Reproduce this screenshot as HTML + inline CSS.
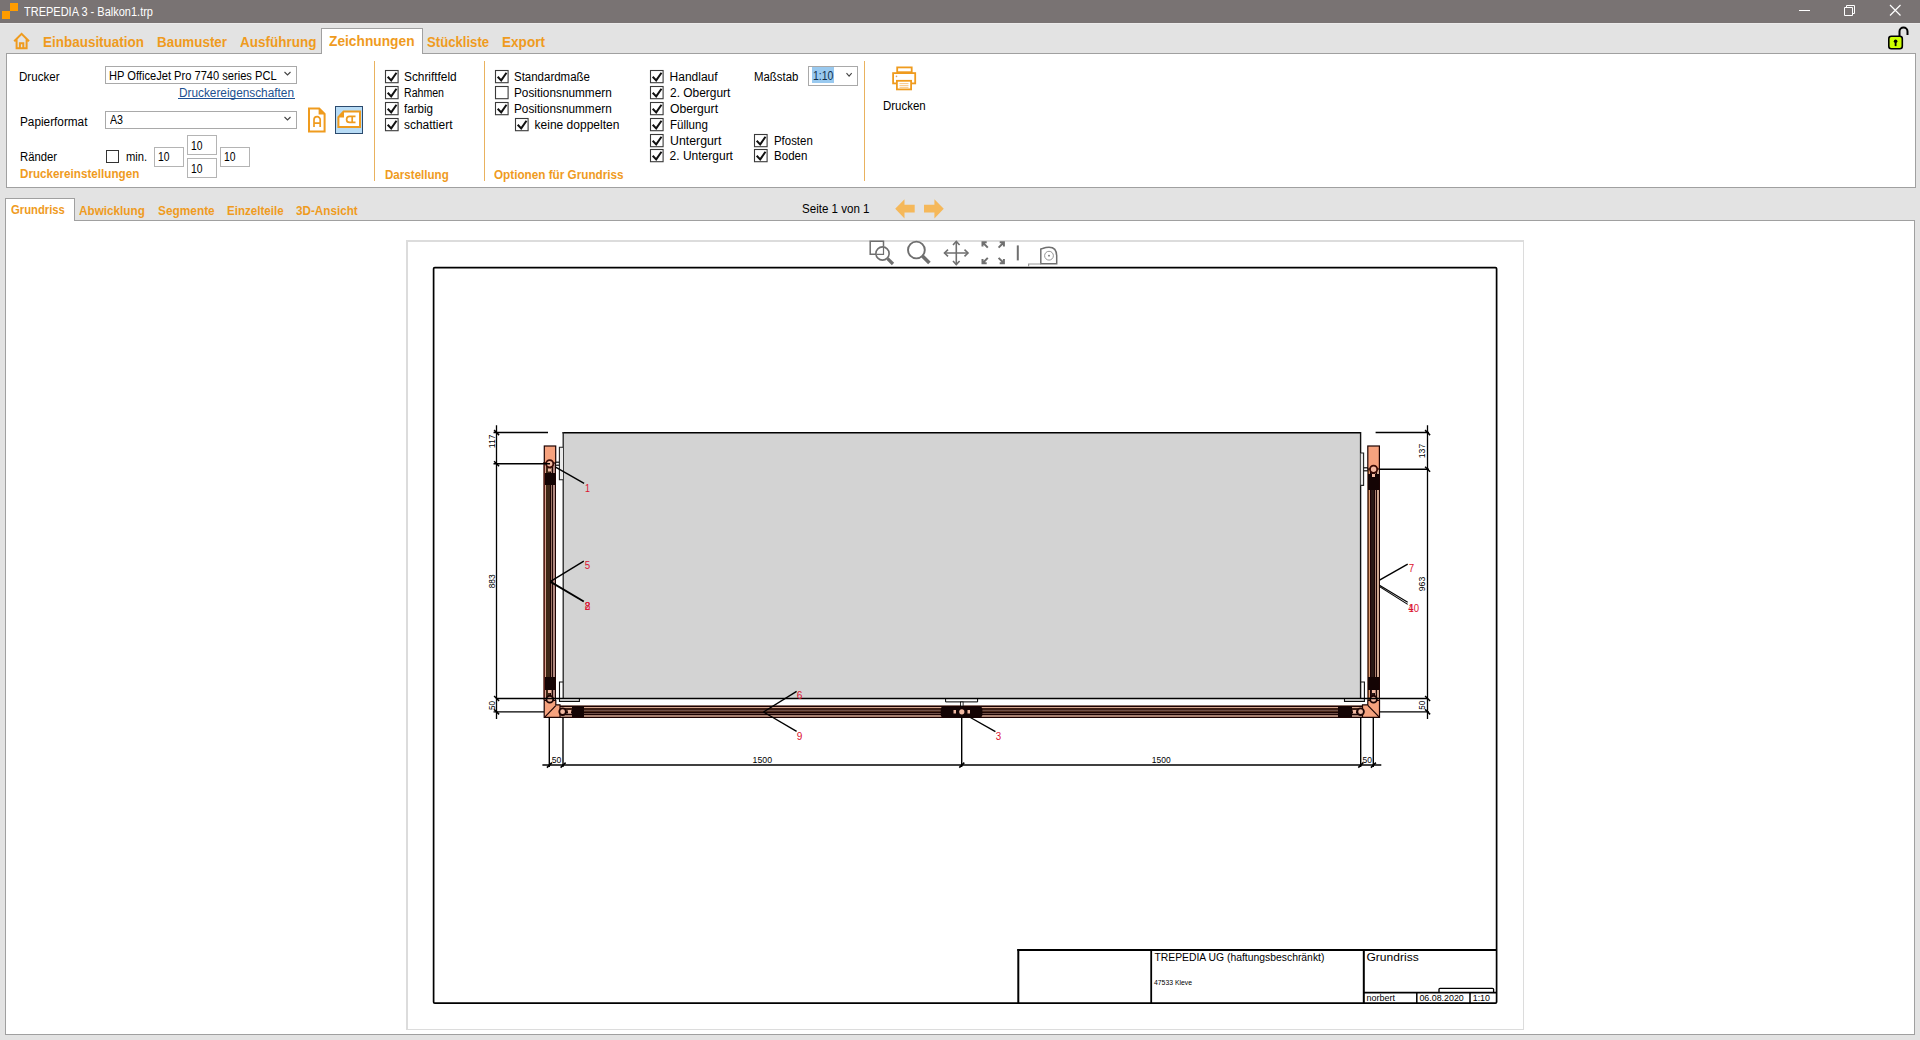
<!DOCTYPE html>
<html><head><meta charset="utf-8">
<style>
*{margin:0;padding:0;box-sizing:border-box}
html,body{width:1920px;height:1040px;overflow:hidden;background:#e3e3e3;font-family:"Liberation Sans",sans-serif;font-size:12px;color:#000}
.a{position:absolute;white-space:nowrap;line-height:1;transform-origin:0 0}
svg.a{overflow:visible}
</style></head>
<body>
<div class="a" style="left:0px;top:0px;width:1920px;height:23px;background:#797373"></div>
<div class="a" style="left:0px;top:23px;width:1920px;height:1px;background:#ebeaea"></div>
<div class="a" style="left:10px;top:3px;width:8px;height:8px;background:#ff9c00"></div>
<div class="a" style="left:2px;top:11px;width:8px;height:8px;background:#ff9c00"></div>
<div class="a" style="left:24.20px;top:6.00px;font-size:12px;color:#fff;transform:scaleX(0.9165);">TREPEDIA 3 - Balkon1.trp</div>
<div class="a" style="left:1799px;top:10px;width:11px;height:1px;background:#fff"></div>
<svg class="a" style="left:1840px;top:0px" width="20" height="18"><path d="M4.5 7.5h8v8h-8z M6.5 7.5v-2h8v8h-2" fill="none" stroke="#fff" stroke-width="1"/></svg>
<svg class="a" style="left:1886px;top:1px" width="18" height="18"><path d="M4 4L14.5 14.5M14.5 4L4 14.5" stroke="#fff" stroke-width="1.2"/></svg>
<div class="a" style="left:321px;top:28px;width:102px;height:27px;background:#fff;border:1px solid #a0a0a0;border-bottom:none"></div>
<div class="a" style="left:6px;top:53px;width:1910px;height:135px;background:#fff;border:1px solid #a0a0a0"></div>
<div class="a" style="left:322px;top:53px;width:100px;height:2px;background:#fff"></div>
<svg class="a" style="left:12px;top:31px" width="20" height="20"><path d="M2.2 10.2L9.6 2.8L17 10.2M4.6 8.6V17.2H14.6V8.6M7.9 17.2V12.2H11.3V17.2" fill="none" stroke="#ef9b1e" stroke-width="2"/></svg>
<div class="a" style="left:42.50px;top:35.00px;font-size:14px;font-weight:bold;color:#ef9b1e;transform:scaleX(0.9619);">Einbausituation</div>
<div class="a" style="left:156.90px;top:35.00px;font-size:14px;font-weight:bold;color:#ef9b1e;transform:scaleX(0.9579);">Baumuster</div>
<div class="a" style="left:240.20px;top:35.00px;font-size:14px;font-weight:bold;color:#ef9b1e;transform:scaleX(0.9637);">Ausführung</div>
<div class="a" style="left:329.00px;top:34.00px;font-size:14px;font-weight:bold;color:#ef9b1e;transform:scaleX(0.9819);">Zeichnungen</div>
<div class="a" style="left:426.70px;top:35.00px;font-size:14px;font-weight:bold;color:#ef9b1e;transform:scaleX(0.9383);">Stückliste</div>
<div class="a" style="left:502.00px;top:35.00px;font-size:14px;font-weight:bold;color:#ef9b1e;transform:scaleX(0.9689);">Export</div>
<svg class="a" style="left:1886px;top:25px" width="24" height="26"><path d="M13.5 11V6.5a4 4 0 0 1 8 0V10" fill="none" stroke="#000" stroke-width="2"/><rect x="2.8" y="11.3" width="13.5" height="12.5" rx="2.5" fill="#ccff00" stroke="#000" stroke-width="1.6"/><circle cx="9.6" cy="16.2" r="1.8" fill="#000"/><path d="M8.7 16.5h1.8v4.6h-1.8z" fill="#000"/></svg>
<div class="a" style="left:19.20px;top:71.00px;font-size:12px;transform:scaleX(0.9643);">Drucker</div>
<div class="a" style="left:105px;top:66px;width:192px;height:18px;background:#fff;border:1px solid #a9a9a9"></div>
<div class="a" style="left:109.40px;top:70.00px;font-size:12px;transform:scaleX(0.9262);">HP OfficeJet Pro 7740 series PCL</div>
<svg class="a" style="left:283px;top:70px" width="10" height="8"><path d="M1.5 2l3 3 3-3" fill="none" stroke="#444" stroke-width="1.1"/></svg>
<div class="a" style="left:179.20px;top:87.00px;font-size:12px;color:#21508f;transform:scaleX(0.9849);">Druckereigenschaften</div>
<div class="a" style="left:178px;top:98px;width:117px;height:1px;background:#1d5194"></div>
<div class="a" style="left:19.50px;top:116.00px;font-size:12px;transform:scaleX(0.9817);">Papierformat</div>
<div class="a" style="left:105px;top:111px;width:192px;height:18px;background:#fff;border:1px solid #a9a9a9"></div>
<div class="a" style="left:109.50px;top:114.00px;font-size:12px;transform:scaleX(0.8880);">A3</div>
<svg class="a" style="left:283px;top:115px" width="10" height="8"><path d="M1.5 2l3 3 3-3" fill="none" stroke="#444" stroke-width="1.1"/></svg>
<svg class="a" style="left:306px;top:106px" width="22" height="28"><path d="M3 2.6H13.2L18.6 8V25.4H3Z" fill="#fff" stroke="#ef9b1e" stroke-width="2"/><path d="M12.6 2.2V8.6H18.8Z" fill="#ef9b1e"/><path d="M8 21V13.8A3.1 3.1 0 0 1 14.2 13.8V21M8 17.2H14.2" fill="none" stroke="#ef9b1e" stroke-width="1.7"/></svg>
<div class="a" style="left:335px;top:106px;width:28px;height:28px;background:#b8dcf6;border:1px solid #2b4a6e"></div>
<svg class="a" style="left:336px;top:107px" width="26" height="26"><path d="M2.4 10.2L7.6 4.5H24V20H2.4Z" fill="#fff" stroke="#ef9b1e" stroke-width="2"/><path d="M1.8 10.6H8V4Z" fill="#ef9b1e"/><path d="M19.5 9.4H13.6A3 3 0 0 0 13.6 15.4H19.5M16.2 9.4V15.4" fill="none" stroke="#ef9b1e" stroke-width="1.7"/></svg>
<div class="a" style="left:19.60px;top:151.00px;font-size:12px;transform:scaleX(0.9400);">Ränder</div>
<div class="a" style="left:106px;top:150px;width:13px;height:13px;background:#fff;border:1px solid #333"></div>
<div class="a" style="left:125.70px;top:151.00px;font-size:12px;transform:scaleX(0.9347);">min.</div>
<div class="a" style="left:154px;top:147px;width:30px;height:20px;background:#fff;border:1px solid #b4b4b4"></div>
<div class="a" style="left:187px;top:135px;width:30px;height:20px;background:#fff;border:1px solid #b4b4b4"></div>
<div class="a" style="left:187px;top:158px;width:30px;height:20px;background:#fff;border:1px solid #b4b4b4"></div>
<div class="a" style="left:220px;top:147px;width:30px;height:20px;background:#fff;border:1px solid #b4b4b4"></div>
<div class="a" style="left:157.80px;top:151.00px;font-size:12px;transform:scaleX(0.8634);">10</div>
<div class="a" style="left:190.90px;top:140.00px;font-size:12px;transform:scaleX(0.8634);">10</div>
<div class="a" style="left:190.90px;top:163.00px;font-size:12px;transform:scaleX(0.8634);">10</div>
<div class="a" style="left:224.10px;top:151.00px;font-size:12px;transform:scaleX(0.8634);">10</div>
<div class="a" style="left:19.60px;top:168.00px;font-size:12px;font-weight:bold;color:#ef9b1e;transform:scaleX(0.9720);">Druckereinstellungen</div>
<div class="a" style="left:374px;top:61px;width:1px;height:120px;background:#e9b25e"></div>
<div class="a" style="left:484px;top:61px;width:1px;height:120px;background:#e9b25e"></div>
<div class="a" style="left:864px;top:61px;width:1px;height:120px;background:#e9b25e"></div>
<svg class="a" style="left:385px;top:70px" width="14" height="14"><rect x="0.5" y="0.5" width="12.6" height="12.2" fill="#fff" stroke="#3a3a3a" stroke-width="1.1"/><path d="M2.7 6.8l3.5 3.6 5.3-7.6" fill="none" stroke="#111" stroke-width="2"/></svg>
<div class="a" style="left:404.40px;top:71.00px;font-size:12px;transform:scaleX(0.9869);">Schriftfeld</div>
<svg class="a" style="left:385px;top:86px" width="14" height="14"><rect x="0.5" y="0.5" width="12.6" height="12.2" fill="#fff" stroke="#3a3a3a" stroke-width="1.1"/><path d="M2.7 6.8l3.5 3.6 5.3-7.6" fill="none" stroke="#111" stroke-width="2"/></svg>
<div class="a" style="left:404.40px;top:87.00px;font-size:12px;transform:scaleX(0.8818);">Rahmen</div>
<svg class="a" style="left:385px;top:102px" width="14" height="14"><rect x="0.5" y="0.5" width="12.6" height="12.2" fill="#fff" stroke="#3a3a3a" stroke-width="1.1"/><path d="M2.7 6.8l3.5 3.6 5.3-7.6" fill="none" stroke="#111" stroke-width="2"/></svg>
<div class="a" style="left:404.40px;top:103.00px;font-size:12px;transform:scaleX(0.9667);">farbig</div>
<svg class="a" style="left:385px;top:118px" width="14" height="14"><rect x="0.5" y="0.5" width="12.6" height="12.2" fill="#fff" stroke="#3a3a3a" stroke-width="1.1"/><path d="M2.7 6.8l3.5 3.6 5.3-7.6" fill="none" stroke="#111" stroke-width="2"/></svg>
<div class="a" style="left:404.40px;top:119.00px;font-size:12px;transform:scaleX(0.9955);">schattiert</div>
<div class="a" style="left:384.75px;top:169.00px;font-size:12px;font-weight:bold;color:#ef9b1e;transform:scaleX(0.9659);">Darstellung</div>
<svg class="a" style="left:495px;top:70px" width="14" height="14"><rect x="0.5" y="0.5" width="12.6" height="12.2" fill="#fff" stroke="#3a3a3a" stroke-width="1.1"/><path d="M2.7 6.8l3.5 3.6 5.3-7.6" fill="none" stroke="#111" stroke-width="2"/></svg>
<div class="a" style="left:514.40px;top:71.00px;font-size:12px;transform:scaleX(0.9569);">Standardmaße</div>
<svg class="a" style="left:495px;top:86px" width="14" height="14"><rect x="0.5" y="0.5" width="12.6" height="12.2" fill="#fff" stroke="#3a3a3a" stroke-width="1.1"/></svg>
<div class="a" style="left:514.40px;top:87.00px;font-size:12px;transform:scaleX(0.9833);">Positionsnummern</div>
<svg class="a" style="left:495px;top:102px" width="14" height="14"><rect x="0.5" y="0.5" width="12.6" height="12.2" fill="#fff" stroke="#3a3a3a" stroke-width="1.1"/><path d="M2.7 6.8l3.5 3.6 5.3-7.6" fill="none" stroke="#111" stroke-width="2"/></svg>
<div class="a" style="left:514.40px;top:103.00px;font-size:12px;transform:scaleX(0.9833);">Positionsnummern</div>
<svg class="a" style="left:515px;top:118px" width="14" height="14"><rect x="0.5" y="0.5" width="12.6" height="12.2" fill="#fff" stroke="#3a3a3a" stroke-width="1.1"/><path d="M2.7 6.8l3.5 3.6 5.3-7.6" fill="none" stroke="#111" stroke-width="2"/></svg>
<div class="a" style="left:534.60px;top:119.00px;font-size:12px;">keine doppelten</div>
<div class="a" style="left:494.40px;top:169.00px;font-size:12px;font-weight:bold;color:#ef9b1e;transform:scaleX(0.9765);">Optionen für Grundriss</div>
<svg class="a" style="left:650px;top:70px" width="14" height="14"><rect x="0.5" y="0.5" width="12.6" height="12.2" fill="#fff" stroke="#3a3a3a" stroke-width="1.1"/><path d="M2.7 6.8l3.5 3.6 5.3-7.6" fill="none" stroke="#111" stroke-width="2"/></svg>
<div class="a" style="left:669.60px;top:71.00px;font-size:12px;">Handlauf</div>
<svg class="a" style="left:650px;top:86px" width="14" height="14"><rect x="0.5" y="0.5" width="12.6" height="12.2" fill="#fff" stroke="#3a3a3a" stroke-width="1.1"/><path d="M2.7 6.8l3.5 3.6 5.3-7.6" fill="none" stroke="#111" stroke-width="2"/></svg>
<div class="a" style="left:669.60px;top:87.00px;font-size:12px;transform:scaleX(0.9947);">2. Obergurt</div>
<svg class="a" style="left:650px;top:102px" width="14" height="14"><rect x="0.5" y="0.5" width="12.6" height="12.2" fill="#fff" stroke="#3a3a3a" stroke-width="1.1"/><path d="M2.7 6.8l3.5 3.6 5.3-7.6" fill="none" stroke="#111" stroke-width="2"/></svg>
<div class="a" style="left:669.60px;top:103.00px;font-size:12px;transform:scaleX(1.0148);">Obergurt</div>
<svg class="a" style="left:650px;top:118px" width="14" height="14"><rect x="0.5" y="0.5" width="12.6" height="12.2" fill="#fff" stroke="#3a3a3a" stroke-width="1.1"/><path d="M2.7 6.8l3.5 3.6 5.3-7.6" fill="none" stroke="#111" stroke-width="2"/></svg>
<div class="a" style="left:669.60px;top:119.00px;font-size:12px;transform:scaleX(0.9629);">Füllung</div>
<svg class="a" style="left:650px;top:134px" width="14" height="14"><rect x="0.5" y="0.5" width="12.6" height="12.2" fill="#fff" stroke="#3a3a3a" stroke-width="1.1"/><path d="M2.7 6.8l3.5 3.6 5.3-7.6" fill="none" stroke="#111" stroke-width="2"/></svg>
<div class="a" style="left:669.60px;top:135.00px;font-size:12px;transform:scaleX(1.0272);">Untergurt</div>
<svg class="a" style="left:650px;top:149px" width="14" height="14"><rect x="0.5" y="0.5" width="12.6" height="12.2" fill="#fff" stroke="#3a3a3a" stroke-width="1.1"/><path d="M2.7 6.8l3.5 3.6 5.3-7.6" fill="none" stroke="#111" stroke-width="2"/></svg>
<div class="a" style="left:669.60px;top:150.00px;font-size:12px;">2. Untergurt</div>
<svg class="a" style="left:754px;top:134px" width="14" height="14"><rect x="0.5" y="0.5" width="12.6" height="12.2" fill="#fff" stroke="#3a3a3a" stroke-width="1.1"/><path d="M2.7 6.8l3.5 3.6 5.3-7.6" fill="none" stroke="#111" stroke-width="2"/></svg>
<div class="a" style="left:773.50px;top:135.00px;font-size:12px;transform:scaleX(0.9526);">Pfosten</div>
<svg class="a" style="left:754px;top:149px" width="14" height="14"><rect x="0.5" y="0.5" width="12.6" height="12.2" fill="#fff" stroke="#3a3a3a" stroke-width="1.1"/><path d="M2.7 6.8l3.5 3.6 5.3-7.6" fill="none" stroke="#111" stroke-width="2"/></svg>
<div class="a" style="left:773.50px;top:150.00px;font-size:12px;transform:scaleX(0.9631);">Boden</div>
<div class="a" style="left:753.75px;top:71.00px;font-size:12px;transform:scaleX(0.9512);">Maßstab</div>
<div class="a" style="left:808px;top:66px;width:50px;height:20px;background:#fff;border:1px solid #a9a9a9"></div>
<div class="a" style="left:812px;top:67px;width:22px;height:16px;background:#99c9ef"></div>
<div class="a" style="left:813.00px;top:70.00px;font-size:12.5px;color:#10304e;transform:scaleX(0.8410);">1:10</div>
<svg class="a" style="left:844.5px;top:71px" width="10" height="8"><path d="M1.5 2.2l2.6 3 2.6-3" fill="none" stroke="#444" stroke-width="1.1"/></svg>
<svg class="a" style="left:890px;top:64px" width="30" height="30"><rect x="7.2" y="3.4" width="14.5" height="4.8" fill="#fff" stroke="#ef9b1e" stroke-width="1.8"/><rect x="3.1" y="9.1" width="22.1" height="10.3" fill="#fff" stroke="#ef9b1e" stroke-width="1.8"/><rect x="6.9" y="16.8" width="14.2" height="8.6" fill="#fff" stroke="#ef9b1e" stroke-width="1.8"/><path d="M9.5 19.6h9M9.5 21.6h9M9.5 23.4h9" stroke="#f7c27a" stroke-width="0.9"/><circle cx="6.5" cy="12.4" r="0.8" fill="#e0a060"/></svg>
<div class="a" style="left:882.80px;top:100.00px;font-size:12px;transform:scaleX(0.9565);">Drucken</div>
<div class="a" style="left:5px;top:220px;width:1910px;height:815px;background:#fff;border:1px solid #a0a0a0"></div>
<div class="a" style="left:5px;top:198px;width:70px;height:23px;background:#fff;border:1px solid #a0a0a0;border-bottom:none"></div>
<div class="a" style="left:11.00px;top:203.00px;font-size:13px;font-weight:bold;color:#ef9b1e;transform:scaleX(0.8674);">Grundriss</div>
<div class="a" style="left:79.20px;top:204.00px;font-size:13px;font-weight:bold;color:#ef9b1e;transform:scaleX(0.9022);">Abwicklung</div>
<div class="a" style="left:157.50px;top:204.00px;font-size:13px;font-weight:bold;color:#ef9b1e;transform:scaleX(0.9125);">Segmente</div>
<div class="a" style="left:226.70px;top:204.00px;font-size:13px;font-weight:bold;color:#ef9b1e;transform:scaleX(0.8919);">Einzelteile</div>
<div class="a" style="left:295.80px;top:204.00px;font-size:13px;font-weight:bold;color:#ef9b1e;transform:scaleX(0.8989);">3D-Ansicht</div>
<div class="a" style="left:802.20px;top:203.00px;font-size:12px;transform:scaleX(0.9632);">Seite 1 von 1</div>
<svg class="a" style="left:893px;top:197px" width="54" height="24"><path d="M2.2 11.8L11.5 2.2V7.8H21.7V15.4H11.5V21.4Z" fill="#f5b85a"/><path d="M31 7.8H41.4V2.2L50.75 11.8L41.4 21.4V15.4H31Z" fill="#f5b85a"/></svg>
<div class="a" style="left:406px;top:240px;width:1118px;height:790px;background:#fff;border:solid #dcdcdc;border-width:2px 1px 1px 2px"></div>
<svg class="a" style="left:0;top:0" width="1920" height="1040"><rect x="433.6" y="267.6" width="1063" height="735.6" rx="1.2" fill="none" stroke="#000" stroke-width="1.7"/></svg>
<svg class="a" style="left:0;top:0" width="1920" height="1040" viewBox="0 0 1920 1040"><rect x="563" y="432.5" width="797.5" height="266" fill="#d3d3d3"/><line x1="562.5" y1="432.7" x2="1360.8" y2="432.7" stroke="#000" stroke-width="1.6"/><line x1="563.2" y1="432" x2="563.2" y2="698.5" stroke="#222" stroke-width="1.3"/><line x1="1360.6" y1="432" x2="1360.6" y2="698.5" stroke="#111" stroke-width="1.4"/><rect x="558" y="705" width="805" height="1" fill="#8a7068" shape-rendering="crispEdges"/><rect x="558" y="706" width="805" height="1" fill="#1c0303" shape-rendering="crispEdges"/><rect x="558" y="707" width="805" height="1" fill="#d8a890" shape-rendering="crispEdges"/><rect x="558" y="708" width="805" height="1" fill="#3c1e14" shape-rendering="crispEdges"/><rect x="558" y="709" width="805" height="1" fill="#3c1e14" shape-rendering="crispEdges"/><rect x="558" y="710" width="805" height="1" fill="#705048" shape-rendering="crispEdges"/><rect x="558" y="711" width="805" height="1" fill="#4a2818" shape-rendering="crispEdges"/><rect x="558" y="712" width="805" height="1" fill="#1c0303" shape-rendering="crispEdges"/><rect x="558" y="713" width="805" height="1" fill="#705048" shape-rendering="crispEdges"/><rect x="558" y="714" width="805" height="1" fill="#1c0303" shape-rendering="crispEdges"/><rect x="558" y="715" width="805" height="1" fill="#a88070" shape-rendering="crispEdges"/><rect x="558" y="716" width="805" height="1" fill="#a88070" shape-rendering="crispEdges"/><rect x="558" y="717" width="805" height="1" fill="#1c0303" shape-rendering="crispEdges"/><rect x="543" y="462" width="1" height="238" fill="#806058" shape-rendering="crispEdges"/><rect x="544" y="462" width="1" height="238" fill="#5a2018" shape-rendering="crispEdges"/><rect x="545" y="462" width="1" height="238" fill="#d8a090" shape-rendering="crispEdges"/><rect x="546" y="462" width="1" height="238" fill="#3a2810" shape-rendering="crispEdges"/><rect x="547" y="462" width="1" height="238" fill="#402818" shape-rendering="crispEdges"/><rect x="548" y="462" width="1" height="238" fill="#402818" shape-rendering="crispEdges"/><rect x="549" y="462" width="1" height="238" fill="#402818" shape-rendering="crispEdges"/><rect x="550" y="462" width="1" height="238" fill="#1c0303" shape-rendering="crispEdges"/><rect x="551" y="462" width="1" height="238" fill="#a07868" shape-rendering="crispEdges"/><rect x="552" y="462" width="1" height="238" fill="#200808" shape-rendering="crispEdges"/><rect x="553" y="462" width="1" height="238" fill="#b08880" shape-rendering="crispEdges"/><rect x="554" y="462" width="1" height="238" fill="#b08880" shape-rendering="crispEdges"/><rect x="555" y="462" width="1" height="238" fill="#1c0303" shape-rendering="crispEdges"/><rect x="1367" y="467" width="1" height="233" fill="#7a6058" shape-rendering="crispEdges"/><rect x="1368" y="467" width="1" height="233" fill="#6a3818" shape-rendering="crispEdges"/><rect x="1369" y="467" width="1" height="233" fill="#e0a078" shape-rendering="crispEdges"/><rect x="1370" y="467" width="1" height="233" fill="#1c0303" shape-rendering="crispEdges"/><rect x="1371" y="467" width="1" height="233" fill="#2a1616" shape-rendering="crispEdges"/><rect x="1372" y="467" width="1" height="233" fill="#2a1a16" shape-rendering="crispEdges"/><rect x="1373" y="467" width="1" height="233" fill="#2a1a16" shape-rendering="crispEdges"/><rect x="1374" y="467" width="1" height="233" fill="#1c0303" shape-rendering="crispEdges"/><rect x="1375" y="467" width="1" height="233" fill="#a88070" shape-rendering="crispEdges"/><rect x="1376" y="467" width="1" height="233" fill="#1c0303" shape-rendering="crispEdges"/><rect x="1377" y="467" width="1" height="233" fill="#d0a890" shape-rendering="crispEdges"/><rect x="1378" y="467" width="1" height="233" fill="#d0a890" shape-rendering="crispEdges"/><rect x="1379" y="467" width="1" height="233" fill="#1c0303" shape-rendering="crispEdges"/><rect x="544.3" y="446" width="11.4" height="17" fill="#f6a27e" stroke="#1c0303" stroke-width="1.2"/><path d="M544.2 700.5V717.4H560V704.8H555.8V700.5Z" fill="#f6a27e" stroke="#1c0303" stroke-width="1.2"/><line x1="545" y1="716.8" x2="555.8" y2="705.6" stroke="#1c0303" stroke-width="1.2"/><rect x="545" y="472.5" width="10" height="12.5" fill="#140404" shape-rendering="crispEdges"/><rect x="545" y="677" width="10" height="12.5" fill="#140404" shape-rendering="crispEdges"/><rect x="572" y="706" width="12" height="11" fill="#140404" shape-rendering="crispEdges"/><circle cx="549.7" cy="463.7" r="3.6" fill="#f2b9a2" stroke="#3a0a04" stroke-width="1.8"/><circle cx="549.8" cy="699.3" r="3.4" fill="#f2b9a2" stroke="#1c0303" stroke-width="1.8"/><circle cx="562.6" cy="711.7" r="3.3" fill="#f2b9a2" stroke="#1c0303" stroke-width="1.8"/><rect x="548" y="468.5" width="3" height="3" fill="#f2b9a2"/><rect x="548" y="690" width="3" height="3" fill="#f2b9a2"/><rect x="568" y="710" width="3" height="3.5" fill="#f2b9a2"/><rect x="1367.8" y="446" width="11.6" height="23" fill="#f6a27e" stroke="#1c0303" stroke-width="1.2"/><path d="M1379.5 700.5V717.4H1362.5V704.8H1367.8V700.5Z" fill="#f6a27e" stroke="#1c0303" stroke-width="1.2"/><line x1="1367.8" y1="705.4" x2="1379" y2="716.8" stroke="#1c0303" stroke-width="1.2"/><rect x="1368" y="474" width="11" height="16" fill="#140404" shape-rendering="crispEdges"/><rect x="1368" y="677" width="11" height="13" fill="#140404" shape-rendering="crispEdges"/><rect x="1338" y="706" width="14" height="11" fill="#140404" shape-rendering="crispEdges"/><circle cx="1373.6" cy="469.2" r="3.6" fill="#f2b9a2" stroke="#3a0a04" stroke-width="1.8"/><circle cx="1373.5" cy="699.3" r="3.4" fill="#f2b9a2" stroke="#1c0303" stroke-width="1.8"/><circle cx="1360.6" cy="711.7" r="3.3" fill="#f2b9a2" stroke="#1c0303" stroke-width="1.8"/><rect x="1372" y="474" width="3" height="3" fill="#f2b9a2"/><rect x="1372" y="690" width="3" height="3" fill="#f2b9a2"/><rect x="1353" y="710" width="3" height="3.5" fill="#f2b9a2"/><rect x="940.7" y="706.5" width="41.7" height="11" rx="3" fill="#140404"/><circle cx="961.8" cy="711.8" r="2.6" fill="#f2b9a2"/><rect x="953.5" y="710" width="2.5" height="3.5" fill="#f2b9a2"/><rect x="967.5" y="710" width="2.5" height="3.5" fill="#f2b9a2"/><path d="M945.6 698.8V701.9H977.6V698.8" fill="#fff" stroke="#000" stroke-width="1"/><rect x="960.5" y="702" width="2.6" height="4" fill="#fff" stroke="#000" stroke-width="0.8"/><path d="M563 447.3H559.4V479.8H563" fill="#eaeaea" stroke="#222" stroke-width="1.1"/><line x1="555.5" y1="462.2" x2="559.4" y2="462.2" stroke="#111" stroke-width="1.2"/><line x1="555.5" y1="465.2" x2="559.4" y2="465.2" stroke="#111" stroke-width="1.2"/><path d="M563 682H559.5V701.4H579.4V699" fill="none" stroke="#111" stroke-width="1.1"/><path d="M1360.7 453H1363.6V485.4H1360.7" fill="#eaeaea" stroke="#222" stroke-width="1.1"/><line x1="1363.6" y1="467.8" x2="1368" y2="467.8" stroke="#111" stroke-width="1.2"/><line x1="1363.6" y1="470.8" x2="1368" y2="470.8" stroke="#111" stroke-width="1.2"/><path d="M1361 682H1364.4V701.4H1344.5V699" fill="none" stroke="#111" stroke-width="1.1"/><line x1="496" y1="698.4" x2="1427" y2="698.4" stroke="#000" stroke-width="1.5"/><line x1="496.5" y1="425.2" x2="496.5" y2="719" stroke="#000" stroke-width="1.3"/><line x1="494.1" y1="430.1" x2="499.1" y2="435.1" stroke="#000" stroke-width="1.5"/><line x1="494.1" y1="461.3" x2="499.1" y2="466.3" stroke="#000" stroke-width="1.5"/><line x1="494.1" y1="696.0" x2="499.1" y2="701.0" stroke="#000" stroke-width="1.5"/><line x1="494.1" y1="709.4" x2="499.1" y2="714.4" stroke="#000" stroke-width="1.5"/><line x1="493.5" y1="432.6" x2="548" y2="432.6" stroke="#000" stroke-width="1.5"/><line x1="493.5" y1="463.7" x2="550" y2="463.7" stroke="#000" stroke-width="1.5"/><line x1="493.5" y1="711.8" x2="544" y2="711.8" stroke="#000" stroke-width="1.3"/><line x1="1427.5" y1="425.2" x2="1427.5" y2="719" stroke="#000" stroke-width="1.3"/><line x1="1425.1" y1="430.1" x2="1430.1" y2="435.1" stroke="#000" stroke-width="1.5"/><line x1="1425.1" y1="466.8" x2="1430.1" y2="471.8" stroke="#000" stroke-width="1.5"/><line x1="1425.1" y1="696.0" x2="1430.1" y2="701.0" stroke="#000" stroke-width="1.5"/><line x1="1425.1" y1="709.4" x2="1430.1" y2="714.4" stroke="#000" stroke-width="1.5"/><line x1="1375.6" y1="432.6" x2="1429" y2="432.6" stroke="#000" stroke-width="1.5"/><line x1="1379" y1="469.2" x2="1429" y2="469.2" stroke="#000" stroke-width="1.5"/><line x1="1379.5" y1="711.8" x2="1429" y2="711.8" stroke="#000" stroke-width="1.3"/><line x1="542.4" y1="765" x2="1381.3" y2="765" stroke="#000" stroke-width="1.5"/><line x1="549.3" y1="717" x2="549.3" y2="767" stroke="#000" stroke-width="1.4"/><line x1="546.9" y1="767.6" x2="551.9" y2="762.6" stroke="#000" stroke-width="1.5"/><line x1="563" y1="717" x2="563" y2="767" stroke="#000" stroke-width="1.4"/><line x1="560.6" y1="767.6" x2="565.6" y2="762.6" stroke="#000" stroke-width="1.5"/><line x1="961.7" y1="717" x2="961.7" y2="767" stroke="#000" stroke-width="1.4"/><line x1="959.3000000000001" y1="767.6" x2="964.3000000000001" y2="762.6" stroke="#000" stroke-width="1.5"/><line x1="1360.7" y1="717" x2="1360.7" y2="767" stroke="#000" stroke-width="1.4"/><line x1="1358.3" y1="767.6" x2="1363.3" y2="762.6" stroke="#000" stroke-width="1.5"/><line x1="1373.3" y1="717" x2="1373.3" y2="767" stroke="#000" stroke-width="1.4"/><line x1="1370.8999999999999" y1="767.6" x2="1375.8999999999999" y2="762.6" stroke="#000" stroke-width="1.5"/><line x1="555.6" y1="467.1" x2="584.1" y2="483.3" stroke="#000" stroke-width="1.4"/><line x1="550.2" y1="581.6" x2="583.8" y2="561.1" stroke="#000" stroke-width="1.4"/><line x1="550.2" y1="581.6" x2="583.8" y2="601.5" stroke="#000" stroke-width="1.9"/><line x1="763.5" y1="712" x2="796.6" y2="691.3" stroke="#000" stroke-width="1.4"/><line x1="763.5" y1="712" x2="796.6" y2="731.4" stroke="#000" stroke-width="1.4"/><line x1="970.4" y1="717.5" x2="995.4" y2="731.6" stroke="#000" stroke-width="1.4"/><line x1="1379.5" y1="580.2" x2="1407.7" y2="564.1" stroke="#000" stroke-width="1.4"/><path d="M1379.5 585.2L1407.7 602.2M1379.5 586.6L1407.7 604.4" stroke="#000" stroke-width="1.1"/><line x1="1017.3" y1="950" x2="1497" y2="950" stroke="#000" stroke-width="2"/><line x1="1018.3" y1="949" x2="1018.3" y2="1004" stroke="#000" stroke-width="2"/><line x1="1151.2" y1="949" x2="1151.2" y2="1004" stroke="#000" stroke-width="1.8"/><line x1="1363.8" y1="949" x2="1363.8" y2="1004" stroke="#000" stroke-width="2"/><line x1="1363.8" y1="992.6" x2="1497" y2="992.6" stroke="#000" stroke-width="1.8"/><line x1="1416.8" y1="992.6" x2="1416.8" y2="1004" stroke="#000" stroke-width="1.5"/><line x1="1470" y1="992.6" x2="1470" y2="1004" stroke="#000" stroke-width="1.5"/><path d="M1439 992V989.2Q1439 988.3 1440 988.3H1492.5Q1493.6 988.3 1493.6 989.2V992" fill="none" stroke="#000" stroke-width="1.3"/></svg>
<svg class="a" style="left:860px;top:236px" width="210" height="34" viewBox="860 236 210 34"><path d="M883.5 246.5V241.3H870.2V254.3H876" fill="none" stroke="#6f6f6f" stroke-width="1.5"/><path d="M883.5 247V254.3H876.5" fill="none" stroke="#6f6f6f" stroke-width="1.2"/><circle cx="882.5" cy="253.5" r="6.6" fill="none" stroke="#6f6f6f" stroke-width="1.6"/><path d="M887.6 258.6L893 264" stroke="#6f6f6f" stroke-width="3.2"/><circle cx="916.4" cy="250" r="8.4" fill="none" stroke="#6f6f6f" stroke-width="1.9"/><path d="M922.4 256L929.4 263" stroke="#6f6f6f" stroke-width="3.6"/><path d="M956.3 241.5V264.5M944.5 253H968" stroke="#6f6f6f" stroke-width="1.6"/><path d="M953 245L956.3 241.5L959.6 245M953 261L956.3 264.5L959.6 261M948 249.7L944.5 253L948 256.3M964.5 249.7L968 253L964.5 256.3" fill="none" stroke="#6f6f6f" stroke-width="1.6"/><path d="M987.8 247.6L982.5 242.3M982.5 246.5V242.3H986.7 M998.6 247.6L1003.9 242.3M1003.9 246.5V242.3H999.7 M987.8 257.9L982.5 263.2M982.5 259V263.2H986.7 M998.6 257.9L1003.9 263.2M1003.9 259V263.2H999.7" fill="none" stroke="#6f6f6f" stroke-width="2"/><path d="M1017.8 245.4V260.4" stroke="#6f6f6f" stroke-width="2"/><path d="M1040.8 263.7V249L1042.5 248.5Q1046 247.3 1049 247.3Q1056.7 247.3 1056.7 256V263.7Z" fill="#fff" stroke="#6f6f6f" stroke-width="1.5"/><circle cx="1049" cy="255.7" r="4.4" fill="none" stroke="#8a8a8a" stroke-width="0.9"/><circle cx="1049" cy="255.7" r="0.9" fill="#6f6f6f"/><path d="M1028.6 266.5V264H1041" fill="none" stroke="#9a9a9a" stroke-width="1.2"/></svg>
<svg class="a" style="left:0;top:0;font-family:'Liberation Sans',sans-serif" width="1920" height="1040"><text transform="translate(495.2,448.2) rotate(-90)" font-size="9.5" textLength="13.6" lengthAdjust="spacingAndGlyphs" fill="#000" font-weight="normal">117</text><text transform="translate(495.0,588.3) rotate(-90)" font-size="9.5" textLength="13.9" lengthAdjust="spacingAndGlyphs" fill="#000" font-weight="normal">883</text><text transform="translate(495.0,709.9) rotate(-90)" font-size="9.5" textLength="9.0" lengthAdjust="spacingAndGlyphs" fill="#000" font-weight="normal">50</text><text transform="translate(1425.2,458.2) rotate(-90)" font-size="9.5" textLength="14.4" lengthAdjust="spacingAndGlyphs" fill="#000" font-weight="normal">137</text><text transform="translate(1425.0,591.2) rotate(-90)" font-size="9.5" textLength="14.4" lengthAdjust="spacingAndGlyphs" fill="#000" font-weight="normal">963</text><text transform="translate(1425.4,709.8) rotate(-90)" font-size="9.5" textLength="8.9" lengthAdjust="spacingAndGlyphs" fill="#000" font-weight="normal">50</text><text transform="translate(551.8,763.2)" font-size="9.5" textLength="9.6" lengthAdjust="spacingAndGlyphs" fill="#000" font-weight="normal">50</text><text transform="translate(752.6,763.2)" font-size="9.5" textLength="19.4" lengthAdjust="spacingAndGlyphs" fill="#000" font-weight="normal">1500</text><text transform="translate(1151.8,763.2)" font-size="9.5" textLength="18.8" lengthAdjust="spacingAndGlyphs" fill="#000" font-weight="normal">1500</text><text transform="translate(1362.6,763.2)" font-size="9.5" textLength="9.4" lengthAdjust="spacingAndGlyphs" fill="#000" font-weight="normal">50</text><text transform="translate(585.0,491.6)" font-size="10" textLength="5" lengthAdjust="spacingAndGlyphs" fill="#dc1230" font-weight="normal">1</text><text transform="translate(584.8,569)" font-size="10" textLength="5.4" lengthAdjust="spacingAndGlyphs" fill="#dc1230" font-weight="normal">5</text><text transform="translate(584.8,610)" font-size="10" textLength="5.6" lengthAdjust="spacingAndGlyphs" fill="#dc1230" font-weight="normal">8</text><text transform="translate(584.8,610)" font-size="10" textLength="5.6" lengthAdjust="spacingAndGlyphs" fill="#dc1230" font-weight="normal">2</text><text transform="translate(796.8,699.4)" font-size="10" textLength="5.6" lengthAdjust="spacingAndGlyphs" fill="#dc1230" font-weight="normal">6</text><text transform="translate(796.8,739.5)" font-size="10" textLength="5.6" lengthAdjust="spacingAndGlyphs" fill="#dc1230" font-weight="normal">9</text><text transform="translate(995.8,739.5)" font-size="10" textLength="5.4" lengthAdjust="spacingAndGlyphs" fill="#dc1230" font-weight="normal">3</text><text transform="translate(1408.8,571.8)" font-size="10" textLength="5.4" lengthAdjust="spacingAndGlyphs" fill="#dc1230" font-weight="normal">7</text><text transform="translate(1408.5,611.7)" font-size="10" textLength="10.6" lengthAdjust="spacingAndGlyphs" fill="#dc1230" font-weight="normal">10</text><text transform="translate(1408.3,611.7)" font-size="10" textLength="5.4" lengthAdjust="spacingAndGlyphs" fill="#dc1230" font-weight="normal">4</text><text transform="translate(1154.4,960.9)" font-size="10.5" textLength="170" lengthAdjust="spacingAndGlyphs" fill="#000" font-weight="normal">TREPEDIA UG (haftungsbeschränkt)</text><text transform="translate(1154,984.9)" font-size="7" textLength="38" lengthAdjust="spacingAndGlyphs" fill="#000" font-weight="normal">47533 Kleve</text><text transform="translate(1366.5,960.5)" font-size="11.5" textLength="52.2" lengthAdjust="spacingAndGlyphs" fill="#000" font-weight="normal">Grundriss</text><text transform="translate(1366.5,1000.5)" font-size="9.3" textLength="28.5" lengthAdjust="spacingAndGlyphs" fill="#000" font-weight="normal">norbert</text><text transform="translate(1419.4,1000.5)" font-size="9.3" textLength="44.4" lengthAdjust="spacingAndGlyphs" fill="#000" font-weight="normal">06.08.2020</text><text transform="translate(1472.7,1000.5)" font-size="9.3" textLength="17.3" lengthAdjust="spacingAndGlyphs" fill="#000" font-weight="normal">1:10</text></svg>

</body></html>
